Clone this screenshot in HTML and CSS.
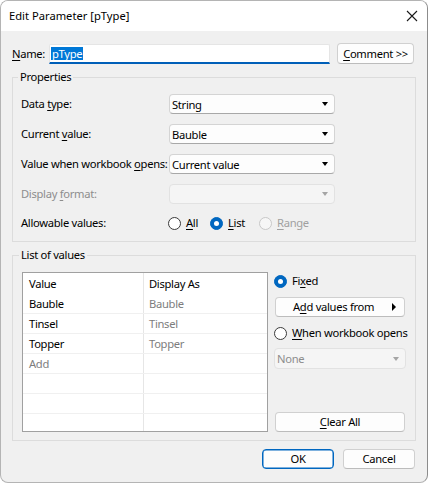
FILE: index.html
```html
<!DOCTYPE html>
<html>
<head>
<meta charset="utf-8">
<link rel="stylesheet" href="styles.css">
</head>
<body>
<div class="window">
  <div class="titlebar">
    <span class="title">Edit Parameter [pType]</span>
    <svg class="close" width="12" height="12" viewBox="0 0 12 12"><path d="M1 1 L11 11 M11 1 L1 11" stroke="#1a1a1a" stroke-width="1.1" fill="none"/></svg>
  </div>
  <div class="namerow">
    <span class="namelabel"><u>N</u>ame:</span>
    <div class="nameinput"><span class="sel">pType</span></div>
    <div class="btn comment"><span><u>C</u>omment &gt;&gt;</span></div>
  </div>
  <fieldset class="group props">
    <legend>Properties</legend>
    <div class="row">
      <span class="lbl">Data <u>t</u>ype:</span>
      <div class="select"><span>String</span><span class="arrow"></span></div>
    </div>
    <div class="row">
      <span class="lbl">Current <u>v</u>alue:</span>
      <div class="select"><span>Bauble</span><span class="arrow"></span></div>
    </div>
    <div class="row">
      <span class="lbl">Value when workbook <u>o</u>pens:</span>
      <div class="select"><span>Current value</span><span class="arrow"></span></div>
    </div>
    <div class="row">
      <span class="lbl dis">Display <u>f</u>ormat:</span>
      <div class="select disabled"><span></span><span class="arrow"></span></div>
    </div>
    <div class="row radiorow">
      <span class="lbl">Allowable values:</span>
      <div class="radios">
        <span class="radio"><span class="dot"></span><span><u>A</u>ll</span></span>
        <span class="radio on"><span class="dot"></span><span><u>L</u>ist</span></span>
        <span class="radio dis"><span class="dot"></span><span><u>R</u>ange</span></span>
      </div>
    </div>
  </fieldset>
  <fieldset class="group list">
    <legend>List of values</legend>
    <div class="listwrap">
      <div class="table">
        <div class="tr head"><div class="td">Value</div><div class="td">Display As</div></div>
        <div class="tr"><div class="td">Bauble</div><div class="td g">Bauble</div></div>
        <div class="tr"><div class="td">Tinsel</div><div class="td g">Tinsel</div></div>
        <div class="tr"><div class="td">Topper</div><div class="td g">Topper</div></div>
        <div class="tr"><div class="td g">Add</div><div class="td"></div></div>
        <div class="tr"><div class="td"></div><div class="td"></div></div>
        <div class="tr"><div class="td"></div><div class="td"></div></div>
        <div class="tr last"><div class="td"></div><div class="td"></div></div>
      </div>
      <div class="side">
        <span class="radio on fixed"><span class="dot"></span><span>Fi<u>x</u>ed</span></span>
        <div class="btn addvals"><span>A<u>d</u>d values from</span><span class="rarrow"></span></div>
        <span class="radio when"><span class="dot"></span><span><u>W</u>hen workbook opens</span></span>
        <div class="select disabled none"><span>None</span><span class="arrow"></span></div>
        <div class="btn clear"><span><u>C</u>lear All</span></div>
      </div>
    </div>
  </fieldset>
  <div class="footer">
    <div class="btn ok">OK</div>
    <div class="btn cancel">Cancel</div>
  </div>
</div>
</body>
</html>
```
FILE: styles.css
```css
html, body { margin: 0; padding: 0; background: #ffffff; }
body { font-family: "Noto Sans", "Open Sans", sans-serif; font-size: 11.2px; letter-spacing: -0.3px; color: #000; white-space: nowrap; }
u { text-decoration: underline; text-underline-offset: 2px; text-decoration-thickness: 1px; }

.window {
  width: 428px; height: 483px; box-sizing: border-box;
  border: 1px solid #b4b4b4; border-right-color: #8c8c8c;
  border-radius: 8px; background: #f0f0f0; overflow: hidden;
  display: flex; flex-direction: column;
}
.titlebar {
  height: 30px; background: #ffffff; flex: none;
  display: flex; align-items: center; justify-content: space-between;
  padding: 0 9px 0 8px;
}
.title { line-height: 16px; letter-spacing: 0; }

.namerow {
  margin-top: 12px; padding-left: 11px;
  display: flex; align-items: center; height: 21px;
}
.namelabel { width: 37px; flex: none; line-height: 16px; }
.nameinput {
  width: 281px; height: 20px; box-sizing: border-box; flex: none;
  background: #ffffff; border: 1px solid #e5e5e5; border-bottom: 2px solid #005fb8;
  border-radius: 2px 2px 0 0; display: flex; align-items: center; padding-left: 1px;
}
.sel { background: #0078d7; color: #fff; line-height: 13px; padding: 0 1px; }

.btn {
  box-sizing: border-box; background: #fdfdfd; flex: none;
  border: 1px solid #d0d0d0; border-bottom-color: #bcbcbc; border-radius: 4px;
  display: flex; align-items: center; justify-content: center; line-height: 16px;
}
.comment { margin-left: 7px; width: 77px; height: 21px; }

.group {
  margin: 5px 11px 0; border: 1px solid #dcdcdc; border-radius: 0;
  min-width: 0;
}
.group legend { padding: 0 2px; margin-left: -3px; line-height: 16px; }
.props { padding: 9px 8px 9px 8px; display: flex; flex-direction: column; gap: 10px; }

.row { display: flex; align-items: center; height: 20px; }
.radiorow { height: 18px; }
.lbl { width: 148px; flex: none; line-height: 16px; }
.dis { color: #8d8d8d; }
.select {
  width: 166px; height: 20px; box-sizing: border-box; flex: none;
  background: #fdfdfd; border: 1px solid #d4d4d4; border-bottom-color: #a8a8a8; border-radius: 4px;
  display: flex; align-items: center; justify-content: space-between; padding: 0 6px 0 2px;
}
.arrow {
  width: 0; height: 0; border-left: 3.5px solid transparent; border-right: 3.5px solid transparent;
  border-top: 4px solid #000;
}
.select.disabled { background: #f5f5f5; border-color: #e2e2e2; color: #8d8d8d; }
.select.disabled .arrow { border-top-color: #a5a5a5; }

.radios { display: flex; align-items: center; margin-left: -1px; }
.radio { display: flex; align-items: center; line-height: 16px; }
.radios .radio { margin-right: 12px; }
.radios .radio.on { margin-right: 14px; }
.dot {
  width: 13px; height: 13px; box-sizing: border-box; border-radius: 50%;
  border: 1px solid #3a3a3a; background: #ffffff; margin-right: 5px; flex: none;
}
.radio.on .dot { background: #0067c0; border-color: #0067c0; position: relative; }
.radio.on .dot::after {
  content: ""; position: absolute; left: 3px; top: 3px; width: 5px; height: 5px;
  border-radius: 50%; background: #fff;
}
.radio.dis { color: #a0a0a0; }
.radio.dis .dot { border-color: #c8c8c8; background: #f6f6f6; }

.list { margin-top: 5px; padding: 9px 9px 8px 9px; }
.listwrap { display: flex; }
.table {
  width: 246px; height: 160px; box-sizing: border-box; flex: none;
  border: 1px solid #a0a0a0; background: #ffffff;
  display: flex; flex-direction: column;
}
.tr { display: flex; height: 20px; flex: none; box-sizing: border-box; border-bottom: 1px solid #f0f0f0; }
.tr.head { height: 21px; border-bottom: none; }
.tr.last { height: 17px; border-bottom: none; }
.td { display: flex; align-items: center; padding-left: 6px; line-height: 16px; box-sizing: border-box; }
.td:first-child { width: 121px; flex: none; border-right: 1px solid #e6e6e6; }
.td:last-child { flex: 1; padding-left: 5px; }
.td.g { color: #7d7d7d; }

.side { margin-left: 6px; width: 132px; display: flex; flex-direction: column; }
.fixed { height: 18px; }
.addvals { margin-top: 7px; margin-left: 1px; width: 130px; height: 20px; justify-content: space-between; padding: 0 8px 0 17px; }
.rarrow {
  width: 0; height: 0; border-top: 4px solid transparent; border-bottom: 4px solid transparent;
  border-left: 4px solid #000;
}
.when { margin-top: 7px; height: 18px; }
.none { margin-top: 6px; width: 132px; height: 21px; }
.clear { margin-top: auto; margin-left: 1px; width: 130px; height: 20px; }

.footer { margin-top: 8px; padding-right: 12px; display: flex; justify-content: flex-end; gap: 9px; }
.ok, .cancel { width: 72px; height: 20px; }
.ok { border: 1px solid #0067c0; box-shadow: inset 0 0 0 0.5px #0067c0; }
```
